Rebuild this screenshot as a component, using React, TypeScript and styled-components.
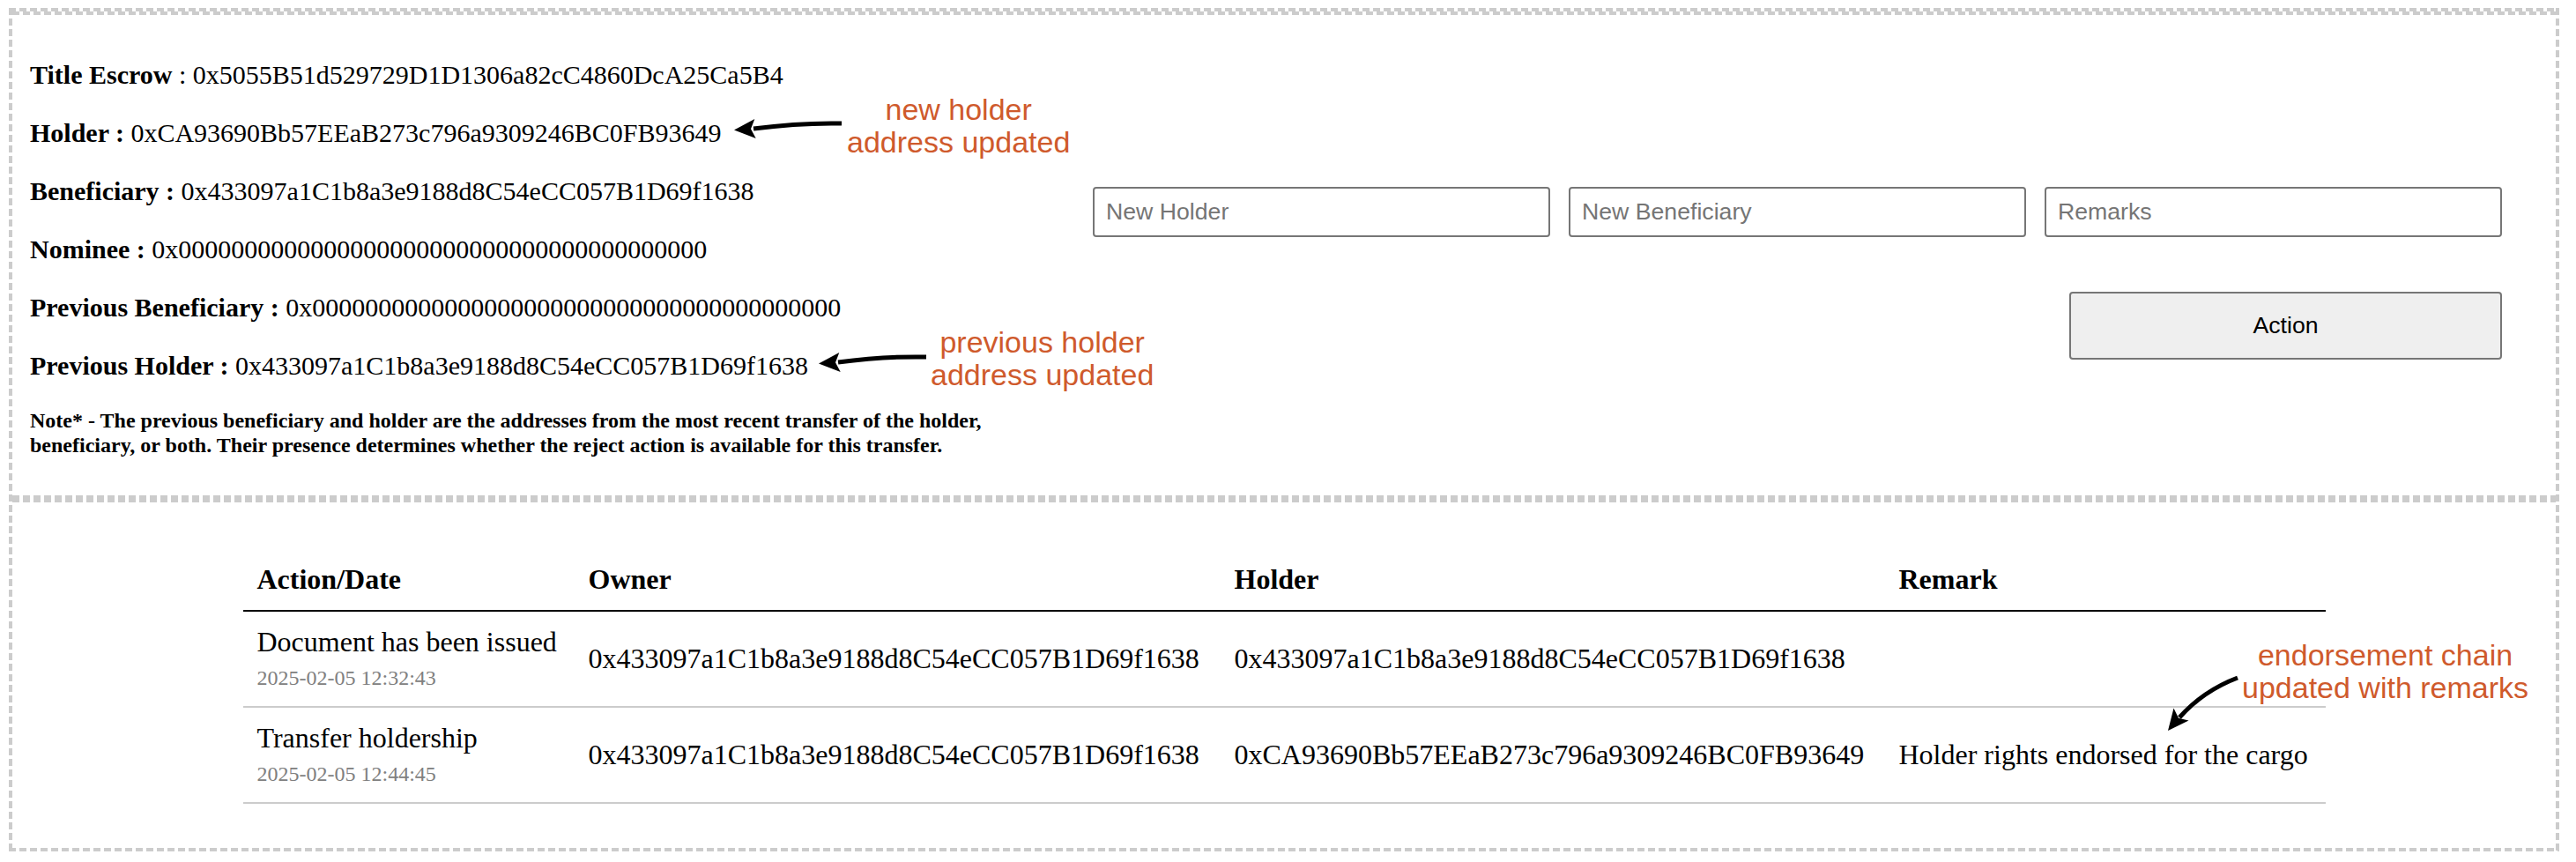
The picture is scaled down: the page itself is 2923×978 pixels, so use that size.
import React from "react";
import styled, { createGlobalStyle } from "styled-components";

const GlobalStyle = createGlobalStyle`
  html, body {
    margin: 0;
    padding: 0;
    background: #ffffff;
  }
  body {
    font-family: "Liberation Serif", "Times New Roman", serif;
    color: #000000;
  }
`;

const hDash = "repeating-linear-gradient(90deg, #cccccc 0 8px, transparent 8px 12px)";
const vDash = "repeating-linear-gradient(180deg, #cccccc 0 8px, transparent 8px 12px)";

const Page = styled.div`
  position: relative;
  width: 2923px;
  height: 978px;
  padding: 9px 0 0 10px;
  box-sizing: border-box;
  overflow: hidden;
`;

const Frame = styled.div`
  width: 2894px;
  height: 957px;
  box-sizing: border-box;
  padding: 4px;
  display: flex;
  flex-direction: column;
  background:
    ${hDash} left top / 100% 4px no-repeat,
    ${hDash} left bottom / 100% 4px no-repeat,
    ${vDash} left top / 4px 100% no-repeat,
    ${vDash} right top / 4px 100% no-repeat;
`;

const EditPanel = styled.section`
  display: flex;
  gap: 56px;
  padding: 54px 61px 47px 20px;
  background:
    ${hDash} left top / 100% 4px no-repeat,
    ${hDash} left bottom / 100% 4px no-repeat;
`;

const Details = styled.div`
  width: 1150px;
  flex: none;
  display: flex;
  flex-direction: column;
  gap: 30px;
`;

const FieldLine = styled.div`
  font-size: 30px;
  line-height: 36px;
  white-space: nowrap;
`;

const Note = styled.p`
  margin: 0;
  font-size: 24px;
  line-height: 28px;
  font-weight: bold;
`;

const Controls = styled.div`
  width: 1599px;
  flex: none;
  display: flex;
  flex-direction: column;
  margin-top: 145px;
`;

const InputRow = styled.div`
  display: flex;
  gap: 21px;
`;

const TextInput = styled.input`
  flex: none;
  width: 519px;
  height: 57px;
  box-sizing: border-box;
  border: 2px solid #767676;
  border-radius: 4px;
  padding: 0 13px;
  margin: 0;
  font-family: "Liberation Sans", Arial, sans-serif;
  font-size: 26.67px;
  color: #000000;
  background: #ffffff;
  outline: none;

  &::placeholder {
    color: #757575;
  }
`;

const ActionButton = styled.button`
  align-self: flex-end;
  width: 491px;
  height: 77px;
  margin: 62px 0 0;
  background: #efefef;
  border: 2px solid #767676;
  border-radius: 4px;
  font-family: "Liberation Sans", Arial, sans-serif;
  font-size: 26.67px;
  color: #000000;
`;

const History = styled.section`
  flex: 1;
  padding-top: 57px;
  background: ${hDash} left top / 100% 4px no-repeat;
`;

const ChainTable = styled.table`
  width: 2363px;
  margin: 0 auto;
  border-collapse: collapse;
  table-layout: fixed;
  font-size: 32px;
  line-height: 37px;
`;

const Col = styled.col<{ $width: number }>`
  width: ${(p) => p.$width}px;
`;

const HeadCell = styled.th`
  text-align: left;
  font-weight: bold;
  padding: 16px;
  border-bottom: 2px solid #000000;
`;

const Cell = styled.td`
  padding: 16px;
  border-bottom: 2px solid #cccccc;
  vertical-align: middle;
  white-space: nowrap;
`;

const DateStamp = styled.div`
  margin-top: 6px;
  font-size: 24px;
  line-height: 32px;
  color: #808080;
`;

const Callout = styled.div<{ $x: number; $y: number }>`
  position: absolute;
  left: ${(p) => p.$x}px;
  top: ${(p) => p.$y}px;
  font-family: "Liberation Sans", Arial, sans-serif;
  font-size: 34px;
  line-height: 37px;
  color: #cf5a2c;
  text-align: center;
  white-space: nowrap;
`;

const ArrowSvg = styled.svg<{ $x: number; $y: number }>`
  position: absolute;
  left: ${(p) => p.$x}px;
  top: ${(p) => p.$y}px;
  overflow: visible;
`;

const LeftArrow = ({ x, y }: { x: number; y: number }) => (
  <ArrowSvg $x={x} $y={y} width="132" height="34" viewBox="0 0 132 34">
    <path d="M127 12 Q 80 11 27 18" fill="none" stroke="#000" strokeWidth="5" />
    <polygon points="5,19.5 28.3,7 24,18.3 29.7,29" fill="#000" />
  </ArrowSvg>
);

const DownArrow = ({ x, y }: { x: number; y: number }) => (
  <ArrowSvg $x={x} $y={y} width="95" height="75" viewBox="0 0 95 75">
    <path d="M89 9 C 60 20, 40 35, 23 54" fill="none" stroke="#000" strokeWidth="5" />
    <polygon points="10,69 16.5,43.5 22,54.7 33.5,57.5" fill="#000" />
  </ArrowSvg>
);

const history = [
  {
    action: "Document has been issued",
    date: "2025-02-05 12:32:43",
    owner: "0x433097a1C1b8a3e9188d8C54eCC057B1D69f1638",
    holder: "0x433097a1C1b8a3e9188d8C54eCC057B1D69f1638",
    remark: "",
  },
  {
    action: "Transfer holdership",
    date: "2025-02-05 12:44:45",
    owner: "0x433097a1C1b8a3e9188d8C54eCC057B1D69f1638",
    holder: "0xCA93690Bb57EEaB273c796a9309246BC0FB93649",
    remark: "Holder rights endorsed for the cargo",
  },
];

export default function App() {
  return (
    <>
      <GlobalStyle />
      <Page>
        <Frame>
          <EditPanel>
            <Details>
              <FieldLine>
                <b>Title Escrow</b> : 0x5055B51d529729D1D1306a82cC4860DcA25Ca5B4
              </FieldLine>
              <FieldLine>
                <b>Holder :</b> 0xCA93690Bb57EEaB273c796a9309246BC0FB93649
              </FieldLine>
              <FieldLine>
                <b>Beneficiary :</b> 0x433097a1C1b8a3e9188d8C54eCC057B1D69f1638
              </FieldLine>
              <FieldLine>
                <b>Nominee :</b> 0x0000000000000000000000000000000000000000
              </FieldLine>
              <FieldLine>
                <b>Previous Beneficiary :</b> 0x0000000000000000000000000000000000000000
              </FieldLine>
              <FieldLine>
                <b>Previous Holder :</b> 0x433097a1C1b8a3e9188d8C54eCC057B1D69f1638
              </FieldLine>
              <Note>
                Note* - The previous beneficiary and holder are the addresses from the most
                recent transfer of the holder, beneficiary, or both. Their presence determines
                whether the reject action is available for this transfer.
              </Note>
            </Details>
            <Controls>
              <InputRow>
                <TextInput placeholder="New Holder" />
                <TextInput placeholder="New Beneficiary" />
                <TextInput placeholder="Remarks" />
              </InputRow>
              <ActionButton>Action</ActionButton>
            </Controls>
          </EditPanel>
          <History>
            <ChainTable>
              <colgroup>
                <Col $width={376} />
                <Col $width={733} />
                <Col $width={754} />
                <Col $width={500} />
              </colgroup>
              <thead>
                <tr>
                  <HeadCell>Action/Date</HeadCell>
                  <HeadCell>Owner</HeadCell>
                  <HeadCell>Holder</HeadCell>
                  <HeadCell>Remark</HeadCell>
                </tr>
              </thead>
              <tbody>
                {history.map((row) => (
                  <tr key={row.date}>
                    <Cell>
                      <div>{row.action}</div>
                      <DateStamp>{row.date}</DateStamp>
                    </Cell>
                    <Cell>{row.owner}</Cell>
                    <Cell>{row.holder}</Cell>
                    <Cell>{row.remark}</Cell>
                  </tr>
                ))}
              </tbody>
            </ChainTable>
          </History>
        </Frame>

        <LeftArrow x={828} y={128} />
        <Callout $x={961} $y={106}>
          new holder
          <br />
          address updated
        </Callout>

        <LeftArrow x={924} y={393} />
        <Callout $x={1056} $y={370}>
          previous holder
          <br />
          address updated
        </Callout>

        <DownArrow x={2450} y={760} />
        <Callout $x={2544} $y={725}>
          endorsement chain
          <br />
          updated with remarks
        </Callout>
      </Page>
    </>
  );
}
